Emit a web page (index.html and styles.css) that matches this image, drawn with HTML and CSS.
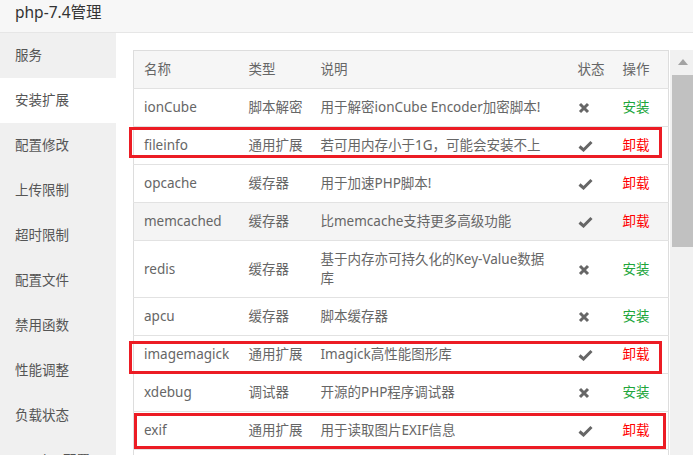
FILE: index.html
```html
<!DOCTYPE html>
<html lang="zh">
<head>
  <meta charset="UTF-8" />
  <title>php-7.4管理</title>
  <link rel="stylesheet" href="styles.css">
</head>
<body>
  <div class="title">php-7.4管理</div>
  <div class="main">
    <ul class="side">
      <li>服务</li>
      <li class="active">安装扩展</li>
      <li>配置修改</li>
      <li>上传限制</li>
      <li>超时限制</li>
      <li>配置文件</li>
      <li>禁用函数</li>
      <li>性能调整</li>
      <li>负载状态</li>
      <li>Session配置</li>
    </ul>
    <div class="content">
      <div class="scroll-box">
        <div class="table-wrap">
          <table class="ext-table">
            <colgroup>
              <col style="width:105px">
              <col style="width:72px">
              <col style="width:257px">
              <col style="width:45px">
              <col>
            </colgroup>
            <thead>
              <tr><th>名称</th><th>类型</th><th>说明</th><th>状态</th><th>操作</th></tr>
            </thead>
            <tbody>
              <tr>
                <td>ionCube</td><td>脚本解密</td><td>用于解密ionCube Encoder加密脚本!</td>
                <td><svg class="ico" width="12" height="12" viewBox="0 0 12 12"><path d="M2 2L10 10M10 2L2 10" /></svg></td>
                <td><a class="install">安装</a></td>
              </tr>
              <tr>
                <td class="mark mark-a">fileinfo</td><td>通用扩展</td><td>若可用内存小于1G，可能会安装不上</td>
                <td><svg class="ico" width="15" height="12" viewBox="0 0 15 12"><path d="M1.5 6.5L5.5 10L13.5 2" /></svg></td>
                <td><a class="remove">卸载</a></td>
              </tr>
              <tr>
                <td>opcache</td><td>缓存器</td><td>用于加速PHP脚本!</td>
                <td><svg class="ico" width="15" height="12" viewBox="0 0 15 12"><path d="M1.5 6.5L5.5 10L13.5 2" /></svg></td>
                <td><a class="remove">卸载</a></td>
              </tr>
              <tr class="hover">
                <td>memcached</td><td>缓存器</td><td>比memcache支持更多高级功能</td>
                <td><svg class="ico" width="15" height="12" viewBox="0 0 15 12"><path d="M1.5 6.5L5.5 10L13.5 2" /></svg></td>
                <td><a class="remove">卸载</a></td>
              </tr>
              <tr>
                <td>redis</td><td>缓存器</td><td>基于内存亦可持久化的Key-Value数据<br>库</td>
                <td><svg class="ico" width="12" height="12" viewBox="0 0 12 12"><path d="M2 2L10 10M10 2L2 10" /></svg></td>
                <td><a class="install">安装</a></td>
              </tr>
              <tr>
                <td>apcu</td><td>缓存器</td><td>脚本缓存器</td>
                <td><svg class="ico" width="12" height="12" viewBox="0 0 12 12"><path d="M2 2L10 10M10 2L2 10" /></svg></td>
                <td><a class="install">安装</a></td>
              </tr>
              <tr>
                <td class="mark mark-b">imagemagick</td><td>通用扩展</td><td>Imagick高性能图形库</td>
                <td><svg class="ico" width="15" height="12" viewBox="0 0 15 12"><path d="M1.5 6.5L5.5 10L13.5 2" /></svg></td>
                <td><a class="remove">卸载</a></td>
              </tr>
              <tr>
                <td>xdebug</td><td>调试器</td><td>开源的PHP程序调试器</td>
                <td><svg class="ico" width="12" height="12" viewBox="0 0 12 12"><path d="M2 2L10 10M10 2L2 10" /></svg></td>
                <td><a class="install">安装</a></td>
              </tr>
              <tr>
                <td class="mark mark-c">exif</td><td>通用扩展</td><td>用于读取图片EXIF信息</td>
                <td><svg class="ico" width="15" height="12" viewBox="0 0 15 12"><path d="M1.5 6.5L5.5 10L13.5 2" /></svg></td>
                <td><a class="remove">卸载</a></td>
              </tr>
              <tr class="last">
                <td></td><td></td><td></td><td></td><td></td>
              </tr>
            </tbody>
          </table>
        </div>
        <div class="scrollbar">
          <div class="arrow"></div>
          <div class="thumb"></div>
        </div>
      </div>
    </div>
  </div>
</body>
</html>
```

FILE: styles.css
```css
*, *::before, *::after {
  box-sizing: border-box;
}

html, body {
  height: 100%;
}

body {
  margin: 0;
  font-family: "Noto Sans", "Noto Sans CJK SC", sans-serif;
  font-size: 13.5px;
  color: #666;
  background: #fff;
  overflow: hidden;
}

.title {
  height: 33px;
  padding-left: 15px;
  line-height: 24px;
  font-size: 15.5px;
  color: #333;
  background: #f7f7f7;
  border-bottom: 1px solid #e6e6e6;
}

.main {
  display: flex;
  height: calc(100% - 33px);
}

.side {
  width: 116px;
  margin: 0;
  padding: 0;
  list-style: none;
  background: #f0f0f0;
  flex-shrink: 0;
}

.side li {
  height: 45px;
  line-height: 44px;
  padding-left: 15px;
  color: #555;
  white-space: nowrap;
}

.side li.active {
  background: #fff;
}

.content {
  flex: 1;
  padding: 17px 0 0 17px;
  overflow: hidden;
}

.scroll-box {
  display: flex;
  height: 100%;
}

.table-wrap {
  flex: 1;
  min-width: 0;
}

.ext-table {
  width: 100%;
  table-layout: fixed;
  border-collapse: collapse;
  border: 1px solid #ddd;
}

.ext-table th,
.ext-table td {
  padding: 9px 0 9px 10px;
  line-height: 19px;
  text-align: left;
  font-weight: normal;
  border-bottom: 1px solid #e2e2e2;
  vertical-align: middle;
}

.ext-table td:nth-child(3) {
  padding-right: 8px;
}

.ext-table thead tr {
  background: #f6f6f6;
}

.ext-table tr.hover {
  background: #f4f4f4;
}

.ext-table tr.last td {
  height: 38px;
}

.ico {
  display: block;
  margin-top: 1px;
}

.ico path {
  fill: none;
  stroke: #666;
  stroke-width: 3;
}

.install {
  color: #20a53a;
}

.remove {
  color: #f00;
}

.mark {
  position: relative;
}

.mark::after {
  content: "";
  position: absolute;
  border: 3px solid #ec1c24;
}

.mark-a::after {
  left: -5px;
  top: 0;
  width: 533px;
  height: 31px;
}

.mark-b::after {
  left: -5px;
  top: 5px;
  width: 533px;
  height: 33px;
}

.mark-c::after {
  left: 0;
  top: 1px;
  width: 532px;
  height: 36px;
}

.scrollbar {
  width: 23px;
  margin-left: 1px;
  background: #f1f1f1;
  flex-shrink: 0;
}

.arrow {
  width: 0;
  height: 0;
  margin: 9px auto 0 8px;
  border-left: 5px solid transparent;
  border-right: 5px solid transparent;
  border-bottom: 6px solid #a3a3a3;
}

.thumb {
  height: 172px;
  margin: 10px 0 0 2px;
  background: #c1c1c1;
}
```
